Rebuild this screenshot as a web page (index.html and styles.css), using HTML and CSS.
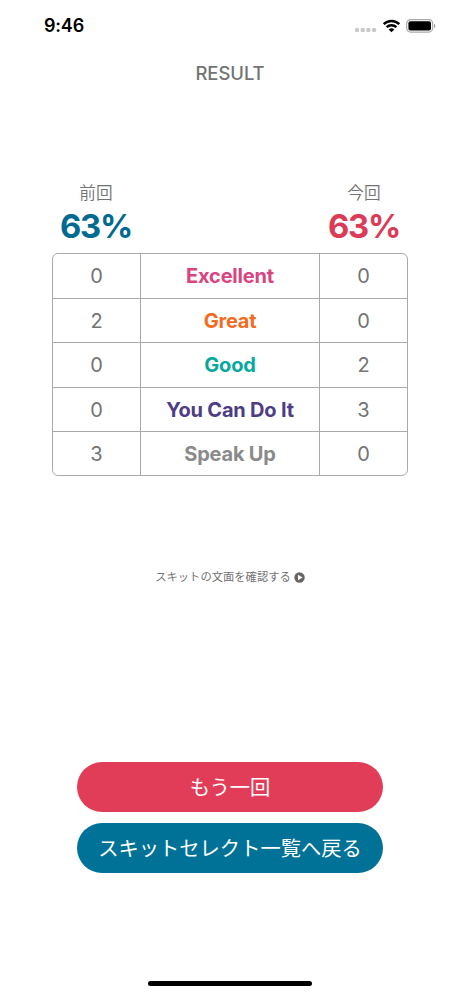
FILE: index.html
```html
<!DOCTYPE html>
<html lang="ja">
<head>
<meta charset="utf-8">
<title>RESULT</title>
<link rel="stylesheet" href="styles.css">
</head>
<body>
<div class="screen">
  <header class="status">
    <span class="time">9:46</span>
    <div class="indicators">
      <svg class="dots" width="22" height="6" viewBox="0 0 22 6" fill="#c9c9c9"><rect x="0" y="1" width="4" height="4" rx="1.2"/><rect x="5.7" y="1" width="4" height="4" rx="1.2"/><rect x="11.4" y="1" width="4" height="4" rx="1.2"/><rect x="17.1" y="1" width="4" height="4" rx="1.2"/></svg>
      <svg class="wifi" width="19" height="14" viewBox="0 0 18 14"><path d="M1.2 5.2a11.2 11.2 0 0 1 15.6 0M4.1 8.2a7 7 0 0 1 9.8 0" fill="none" stroke="#000" stroke-width="2.4"/><path d="M6.2 10.4a4.2 4.2 0 0 1 5.6 0L9 13.3z"/></svg>
      <svg class="battery" width="30" height="14" viewBox="0 0 30 14"><rect x=".7" y=".6" width="26" height="12.5" rx="4" fill="none" stroke="#aaa" stroke-width="1.2"/><rect x="2.4" y="2.2" width="22.6" height="9.3" rx="2"/><path d="M28 4.7c1.800.8 1.800 3.500 0 4.300z" fill="#999"/></svg>
    </div>
  </header>
  <h1 class="title">RESULT</h1>
  <main>
    <section class="scores">
      <div class="score previous"><span class="label">前回</span><strong>63%</strong></div>
      <div class="score current"><span class="label">今回</span><strong>63%</strong></div>
    </section>
    <div class="table">
      <div class="row"><span>0</span><b class="excellent">Excellent</b><span>0</span></div>
      <div class="row"><span>2</span><b class="great">Great</b><span>0</span></div>
      <div class="row"><span>0</span><b class="good">Good</b><span>2</span></div>
      <div class="row"><span>0</span><b class="can">You Can Do It</b><span>3</span></div>
      <div class="row"><span>3</span><b class="speak">Speak Up</b><span>0</span></div>
    </div>
    <a class="review"><span>スキットの文面を確認する</span><svg width="11" height="11" viewBox="0 0 11 11"><circle cx="5.5" cy="5.5" r="5.2" fill="#666"/><path d="M4 2.800 8.500 5.500 4 8.200z" fill="#fff"/></svg></a>
    <div class="actions">
      <button class="retry">もう一回</button>
      <button class="back">スキットセレクト一覧へ戻る</button>
    </div>
  </main>
  <div class="home"></div>
</div>
</body>
</html>
```
FILE: styles.css
```css
* { box-sizing: border-box; }
body { margin: 0; background: #fff; color: #737373; font-family: Inter, "Noto Sans CJK JP", sans-serif; }
.screen { width: 460px; height: 996px; display: flex; flex-direction: column; align-items: center; overflow: hidden; }
.status { width: 100%; height: 50px; display: flex; justify-content: space-between; padding: 15px 24px 0 44px; color: #000; }
.time { font-size: 18px; line-height: 21px; font-weight: 600; letter-spacing: -.2px; }
.indicators { display: flex; gap: 5px; height: 21px; align-items: center; }
.dots { margin-top: 9px; }
.title { margin: 11px 0 0; font-size: 18.4px; line-height: 24px; font-weight: 500; }
main { width: 356px; margin-top: 96px; display: flex; flex-direction: column; align-items: center; }
.scores { width: 100%; height: 72px; display: flex; justify-content: space-between; }
.score { width: 88px; display: flex; flex-direction: column; align-items: center; white-space: nowrap; }
.label { font-size: 16.7px; line-height: 25px; font-weight: 350; }
.score strong { font-size: 32.8px; line-height: 40px; letter-spacing: -1.3px; }
.previous strong { color: #006b91; }
.current strong { color: #dc3b56; }
.table { width: 356px; height: 223px; border: 1px solid #aaa; border-radius: 6px; display: grid; grid-template-rows: repeat(5, 1fr); overflow: hidden; }
.row { min-height: 0; display: grid; grid-template-columns: 87px 1fr 87px; text-align: center; font-size: 20px; line-height: 44px; }
.row + .row { border-top: 1px solid #aaa; }
.row b { font-weight: 650; letter-spacing: -.2px; border: solid #aaa; border-width: 0 1px; }
.excellent { color: #d94480; }
.great { color: #f26b21; }
.good { color: #06a99d; }
.can { color: #4e3d86; }
.speak { color: #8a8a8a; }
.review { margin-top: 93px; height: 17px; display: flex; align-items: center; gap: 3px; font-size: 11.3px; line-height: 17px; white-space: nowrap; }
.review svg { margin-top: -1px; }
.actions { margin-top: 176px; display: flex; flex-direction: column; gap: 11px; }
.actions button { width: 306px; height: 50px; border: 0; border-radius: 25px; padding: 1px 0 0; color: #fff; font: 400 20.3px/49px Inter, "Noto Sans CJK JP", sans-serif; white-space: nowrap; }
.retry { background: #e23d58; }
.actions .back { background: #007297; }
.home { width: 164px; height: 5px; margin: auto 0 10px; border-radius: 3px; background: #000; flex: none; }
```
